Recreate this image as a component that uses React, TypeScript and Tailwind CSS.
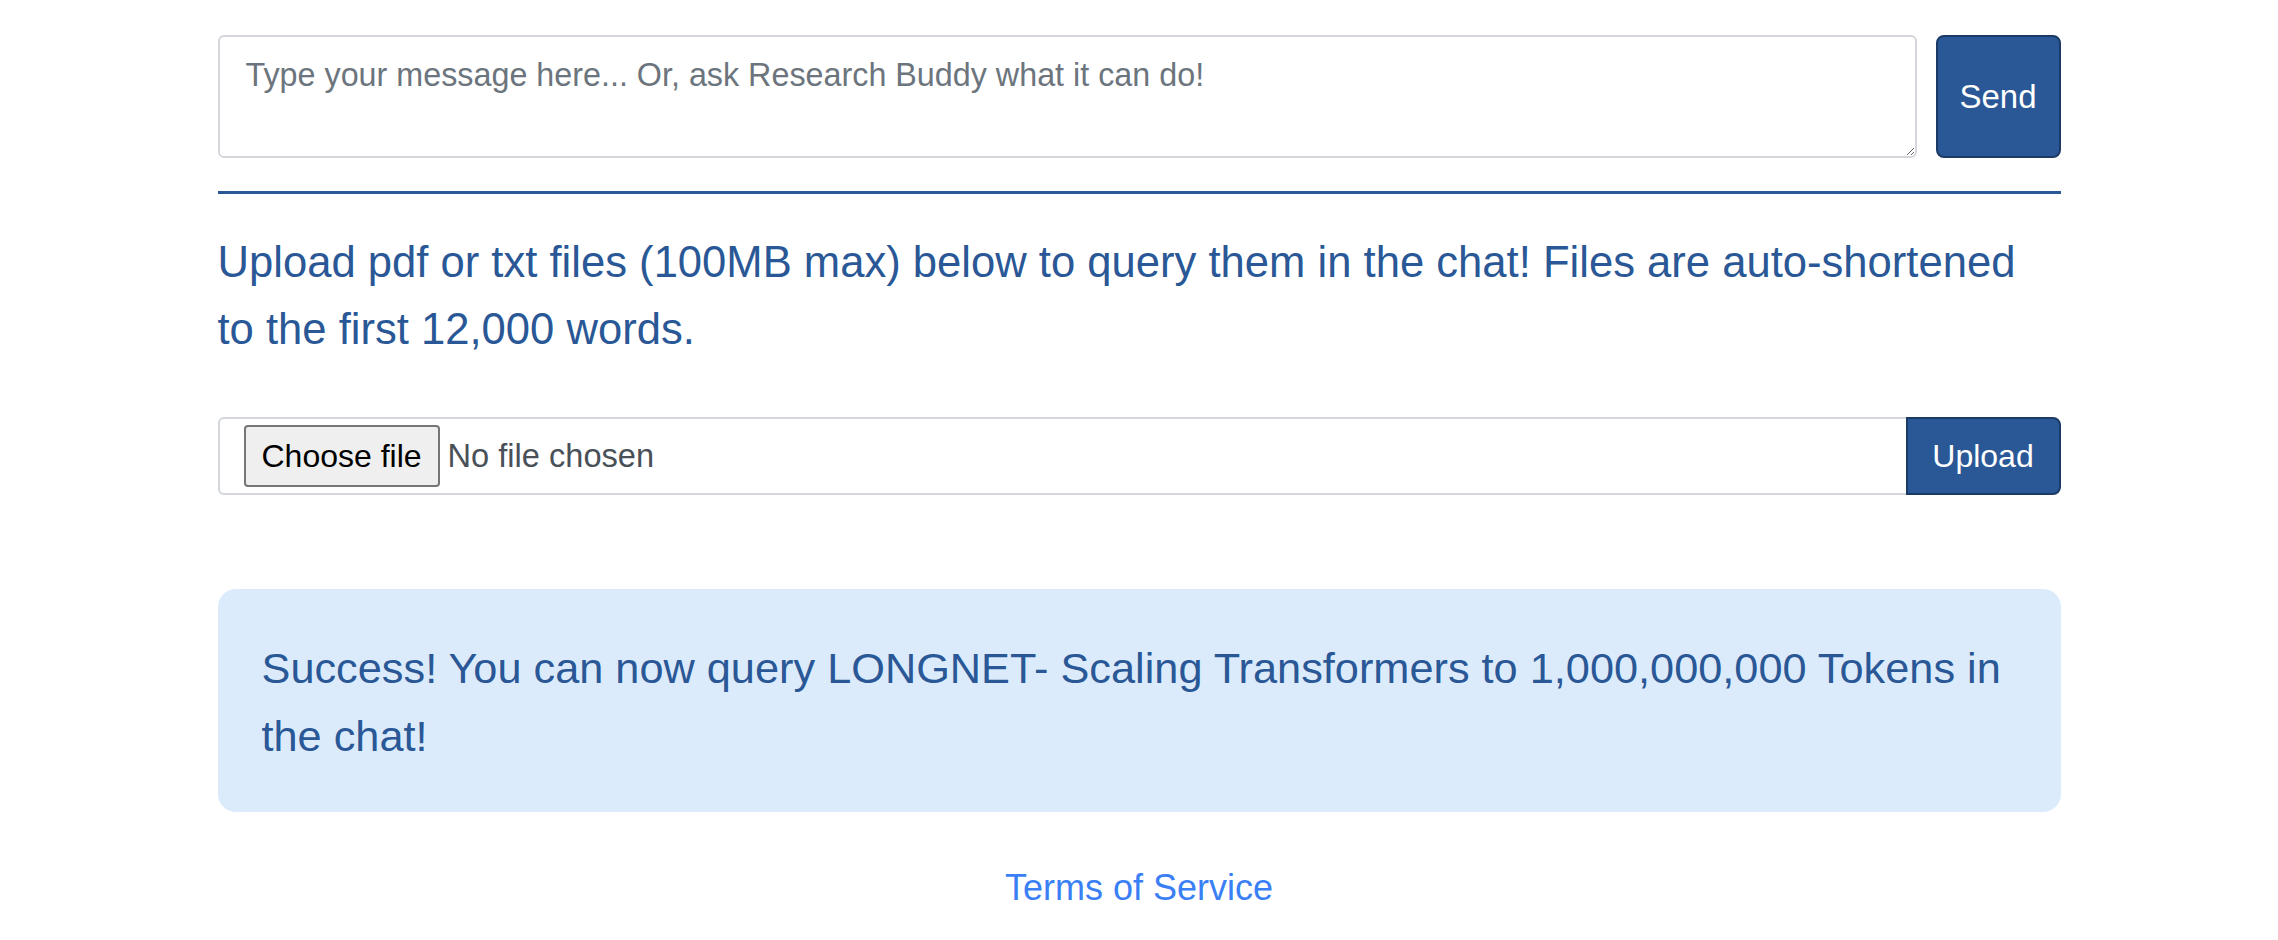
import React from 'react';

export default function App() {
  return (
    <div className="min-h-screen bg-white pt-[35px] font-['Liberation_Sans',Arial,sans-serif]">
      <div className="w-[1843px] mx-auto">
        <div className="flex gap-[19px]">
          <textarea
            className="flex-1 h-[123px] border-2 border-[#d3d7dc] rounded-[6px] px-[26px] py-[14px] text-[32.3px] leading-[1.5] text-[#212529] placeholder:text-[#6c757d] outline-none"
            placeholder="Type your message here... Or, ask Research Buddy what it can do!"
          />
          <button className="w-[125px] h-[123px] bg-[#2a5896] border-2 border-[#1b3a66] rounded-[8px] text-white text-[33px]">
            Send
          </button>
        </div>

        <hr className="mt-[33px] border-0 h-[3px] bg-[#2a5896]" />

        <p className="mt-[35px] text-[43.6px] leading-[67px] text-[#2a5896]">
          Upload pdf or txt files (100MB max) below to query them in the chat! Files are auto-shortened to the first 12,000 words.
        </p>

        <div className="mt-[54px] flex h-[78px]">
          <div className="flex-1 flex items-center border-2 border-r-0 border-[#d3d7dc] rounded-l-[6px] pl-[24px]">
            <span className="h-[62px] px-[16px] flex items-center bg-[#efefef] border-2 border-[#767676] rounded-[4px] text-[32px] text-black">
              Choose file
            </span>
            <span className="ml-[8px] text-[32.6px] text-[#495057]">No file chosen</span>
          </div>
          <button className="w-[155px] bg-[#2a5896] border-2 border-[#1b3a66] rounded-r-[8px] text-white text-[32px]">
            Upload
          </button>
        </div>

        <div className="mt-[94px] bg-[#dcebfb] rounded-[18px] px-[44px] pt-[45px] pb-[42px] text-[43.3px] leading-[68px] text-[#2a5896]">
          Success! You can now query LONGNET- Scaling Transformers to 1,000,000,000 Tokens in the chat!
        </div>

        <div className="mt-[49px] text-center">
          <a href="#" className="text-[36px] leading-[54px] text-[#3b7ff5]">
            Terms of Service
          </a>
        </div>
      </div>
    </div>
  );
}
